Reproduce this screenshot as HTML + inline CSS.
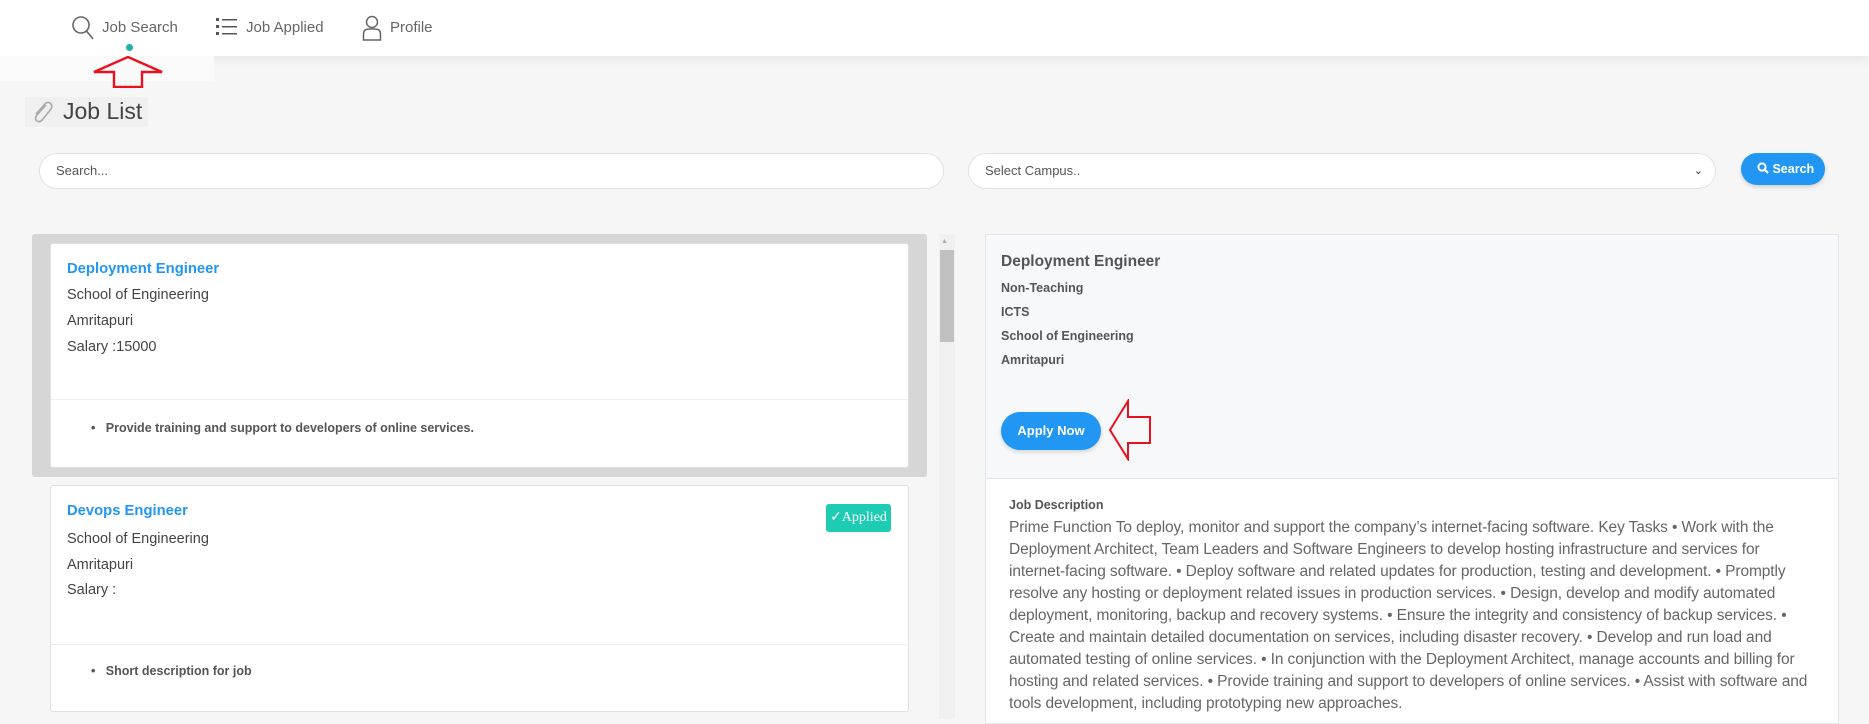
<!DOCTYPE html>
<html><head><meta charset="utf-8"><style>
*{box-sizing:border-box;margin:0;padding:0}
body{width:1869px;height:719px;overflow:hidden;background:#f6f6f7;font-family:"Liberation Sans",sans-serif;color:#555;position:relative}
.abs{position:absolute}
.nav{left:0;top:0;width:1869px;height:56px;background:#fff;box-shadow:0 4px 10px rgba(0,0,0,.06)}
.nav span{position:absolute;top:19px;font-size:15px;color:#666}
.inp{background:#fff;border:1px solid #e2e2e2;border-radius:18px;font-size:13px;color:#555;padding-left:16px;line-height:34px}
.card{background:#fff;border:1px solid #e0e0e0;border-radius:3px}
.t{font-size:14.5px;color:#444}
.blue{color:#2196f3;font-weight:bold;font-size:14.8px}
.desc div{white-space:nowrap;height:22px;font-size:15.5px;color:#666;letter-spacing:-.1px}
.rb{font-size:12.5px;font-weight:bold;color:#555}
</style></head><body>
<div class="abs nav">
<svg class="abs" style="left:71px;top:15px" width="24" height="26" viewBox="0 0 24 26"><circle cx="10" cy="10" r="8" fill="none" stroke="#666" stroke-width="1.6"/><path d="M15.5 16 L22 24" stroke="#666" stroke-width="1.6"/></svg>
<span style="left:102px">Job Search</span>
<svg class="abs" style="left:216px;top:17px" width="22" height="20" viewBox="0 0 22 20"><g fill="#555"><rect x="0" y="1" width="3" height="3"/><rect x="0" y="8" width="3" height="3"/><rect x="0" y="15" width="3" height="3"/><rect x="6" y="2" width="15" height="1.5"/><rect x="6" y="9" width="15" height="1.5"/><rect x="6" y="16" width="15" height="1.5"/></g></svg>
<span style="left:246px">Job Applied</span>
<svg class="abs" style="left:362px;top:15px" width="20" height="26" viewBox="0 0 20 26"><circle cx="10" cy="7" r="5.5" fill="none" stroke="#666" stroke-width="1.5"/><path d="M1.5 25 V19 Q1.5 14 7 14 H13 Q18.5 14 18.5 19 V25 Z" fill="none" stroke="#666" stroke-width="1.5"/></svg>
<span style="left:390px">Profile</span>
<div class="abs" style="left:126px;top:44px;width:7px;height:7px;border-radius:50%;background:#20b2a6"></div>
</div>
<div class="abs" style="left:0;top:56px;width:214px;height:25px;background:#fafafa"></div>
<svg class="abs" style="left:92px;top:56px" width="72" height="32" viewBox="0 0 72 32"><path d="M36 1 L70 16 H50 V31 H22 V16 H2 Z" fill="none" stroke="#e8121d" stroke-width="2.4"/></svg>
<div class="abs" style="left:25px;top:97px;width:123px;height:30px;background:#f0f0f0"></div>
<svg class="abs" style="left:31px;top:100px" width="24" height="24" viewBox="0 0 24 24"><path d="M15 5 L6 15 Q3 19 6 21 Q9 23 12 19 L20 9 Q22 5 19 3 Q16 1 13 5 L5 14" fill="none" stroke="#aaa" stroke-width="1.6"/></svg>
<div class="abs" style="left:63px;top:98px;font-size:23px;color:#444">Job List</div>
<div class="abs inp" style="left:39px;top:153px;width:905px;height:36px">Search...</div>
<div class="abs inp" style="left:968px;top:153px;width:748px;height:36px">Select Campus..<span style="position:absolute;right:12px;top:0;font-size:11px;color:#333">&#8964;</span></div>
<div class="abs" style="left:1741px;top:153px;width:84px;height:32px;border-radius:16px;background:#2196f3;color:#fff;font-size:12.5px;font-weight:bold;line-height:32px;padding-left:16px;box-shadow:0 2px 4px rgba(0,0,0,.15)"><svg width="12" height="12" viewBox="0 0 12 12" style="vertical-align:-1px"><circle cx="5" cy="5" r="3.6" fill="none" stroke="#fff" stroke-width="2"/><path d="M7.5 7.5 L11 11" stroke="#fff" stroke-width="2.2"/></svg> Search</div>

<div class="abs" style="left:32px;top:234px;width:895px;height:243px;background:#d6d6d6;border-radius:3px"></div>
<div class="abs card" style="left:50px;top:243px;width:859px;height:225px">
<div class="abs blue" style="left:16px;top:17px">Deployment Engineer</div>
<div class="abs t" style="left:16px;top:43px">School of Engineering</div>
<div class="abs t" style="left:16px;top:69px">Amritapuri</div>
<div class="abs t" style="left:16px;top:95px">Salary :15000</div>
<div class="abs" style="left:0;top:155px;width:857px;border-top:1px solid #eee"></div>
<div class="abs rb" style="left:40px;top:177px">•&nbsp;&nbsp; Provide training and support to developers of online services.</div>
</div>
<div class="abs card" style="left:50px;top:485px;width:859px;height:227px">
<div class="abs blue" style="left:16px;top:17px">Devops Engineer</div>
<div class="abs" style="left:775px;top:18px;width:65px;height:28px;background:#1ecbb3;border-radius:3px;color:#fff;font-family:'Liberation Serif',serif;font-size:14px;line-height:28px;text-align:center">✓Applied</div>
<div class="abs t" style="left:16px;top:45px">School of Engineering</div>
<div class="abs t" style="left:16px;top:71px">Amritapuri</div>
<div class="abs t" style="left:16px;top:96px">Salary :</div>
<div class="abs" style="left:0;top:158px;width:857px;border-top:1px solid #eee"></div>
<div class="abs rb" style="left:40px;top:178px">•&nbsp;&nbsp; Short description for job</div>
</div>
<div class="abs" style="left:939px;top:234px;width:16px;height:485px;background:#f0f0f0"></div>
<div class="abs" style="left:941px;top:238px;font-size:7px;color:#aaa">▲</div>
<div class="abs" style="left:940px;top:250px;width:14px;height:92px;background:#c1c1c1"></div>

<div class="abs" style="left:985px;top:234px;width:854px;height:490px;background:#fff;border:1px solid #e3e5e8"></div>
<div class="abs" style="left:986px;top:235px;width:852px;height:244px;background:#f7f8fa;border-bottom:1px solid #e3e5e8"></div>
<div class="abs" style="left:1001px;top:253px;font-size:15.5px;font-weight:bold;color:#555">Deployment Engineer</div>
<div class="abs rb" style="left:1001px;top:281px">Non-Teaching</div>
<div class="abs rb" style="left:1001px;top:305px">ICTS</div>
<div class="abs rb" style="left:1001px;top:329px">School of Engineering</div>
<div class="abs rb" style="left:1001px;top:353px">Amritapuri</div>
<div class="abs" style="left:1001px;top:412px;width:100px;height:38px;border-radius:19px;background:#2196f3;color:#fff;font-size:13px;font-weight:bold;line-height:38px;text-align:center;box-shadow:0 2px 4px rgba(0,0,0,.15)">Apply Now</div>
<svg class="abs" style="left:1108px;top:399px" width="50" height="62" viewBox="0 0 50 62"><path d="M2 31 L20 2 V18 H42 V44 H20 V60 Z" fill="none" stroke="#e8121d" stroke-width="2"/></svg>
<div class="abs" style="left:1009px;top:498px;font-size:12.5px;font-weight:bold;color:#555">Job Description</div>
<div class="abs desc" style="left:1009px;top:519px">
<div>Prime Function To deploy, monitor and support the company’s internet-facing software. Key Tasks • Work with the</div>
<div>Deployment Architect, Team Leaders and Software Engineers to develop hosting infrastructure and services for</div>
<div>internet-facing software. • Deploy software and related updates for production, testing and development. • Promptly</div>
<div>resolve any hosting or deployment related issues in production services. • Design, develop and modify automated</div>
<div>deployment, monitoring, backup and recovery systems. • Ensure the integrity and consistency of backup services. •</div>
<div>Create and maintain detailed documentation on services, including disaster recovery. • Develop and run load and</div>
<div>automated testing of online services. • In conjunction with the Deployment Architect, manage accounts and billing for</div>
<div>hosting and related services. • Provide training and support to developers of online services. • Assist with software and</div>
<div>tools development, including prototyping new approaches.</div>
</div>
</body></html>
